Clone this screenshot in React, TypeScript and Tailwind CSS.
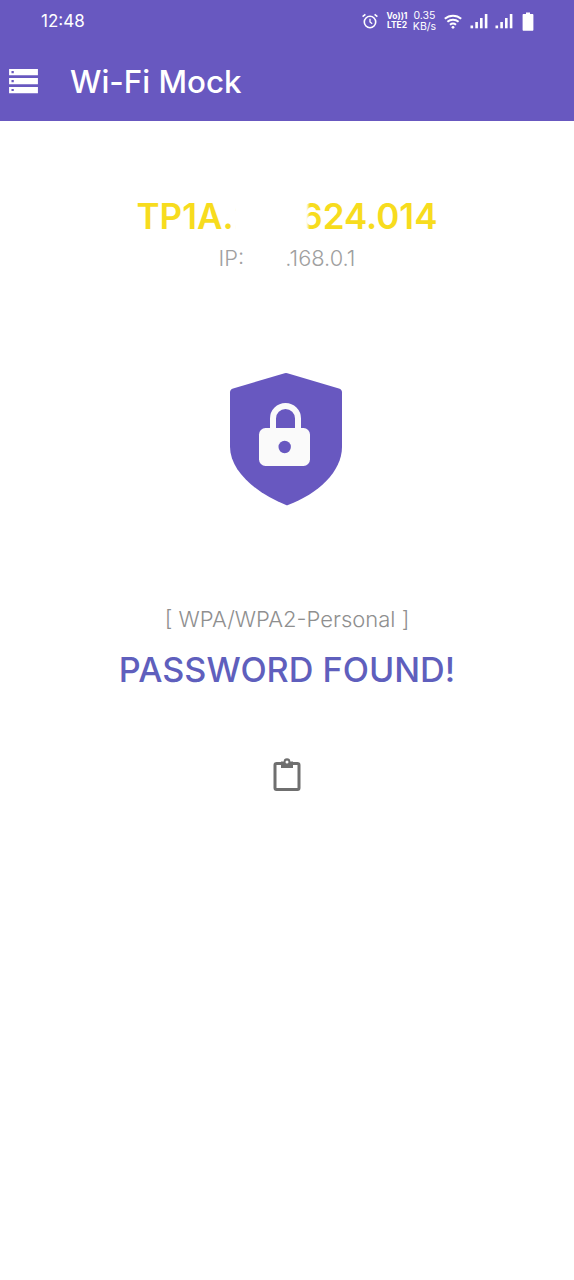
const inter = { fontFamily: "Inter, 'Noto Sans', sans-serif" }

function SignalIcon({ className }: { className: string }) {
  return (
    <svg width="18" height="16" viewBox="0 0 18 16" fill="currentColor" className={className}>
      <rect x="0.5" y="12.5" width="2.6" height="2.8" />
      <rect x="5.3" y="9" width="2.6" height="6.3" />
      <rect x="10" y="5" width="2.6" height="10.3" />
      <rect x="14.8" y="1" width="2.6" height="14.3" />
    </svg>
  )
}

function StatusIcons() {
  return (
    <div className="flex items-center text-white">
      {/* alarm */}
      <svg width="18" height="18" viewBox="0 0 18 18" fill="none" stroke="currentColor" strokeWidth="1.6" className="mr-[8px]">
        <circle cx="9" cy="10" r="5.7" />
        <path d="M9 6.800V10l2.200 1.800" strokeWidth="1.300" />
        <path d="M1.600 4.600 4.400 2.300M16.400 4.600l-2.800-2.300" />
      </svg>
      <div className="mr-[5px] flex w-[20px] flex-col items-center text-[8.500px] font-bold leading-[9px]">
        <span>Vo))1</span>
        <span>LTE2</span>
      </div>
      <div className="mr-[7px] flex w-[25px] flex-col items-center text-[10.500px] leading-[11px]">
        <span>0.35</span>
        <span>KB/s</span>
      </div>
      {/* wifi */}
      <svg width="18" height="15" viewBox="0 0 18 15" fill="none" stroke="currentColor" strokeWidth="2" className="mr-[8px]">
        <path d="M0.800 4.800C5.500 0.600 12.500 0.600 17.200 4.800" />
        <path d="M3.400 7.800C6.600 5.100 11.400 5.100 14.600 7.800" />
        <path d="M6 10.700C7.800 9.300 10.200 9.300 12 10.700" />
        <circle cx="9" cy="13.300" r="1.400" fill="currentColor" stroke="none" />
      </svg>
      <SignalIcon className="mr-[7px]" />
      <SignalIcon className="mr-[9px]" />
      {/* battery */}
      <svg width="12" height="19" viewBox="0 0 12 19" fill="currentColor">
        <path d="M4 0.500h4v1.600h2.400c.6 0 1 .4 1 1v14.600c0 .6-.4 1-1 1H1.600c-.6 0-1-.4-1-1V3.100c0-.6.4-1 1-1H4z" />
      </svg>
    </div>
  )
}

function MenuIcon() {
  return (
    <svg width="29" height="25" viewBox="0 0 30 26" className="shrink-0">
      <path fill="#fff" fillRule="evenodd" d="M0 0h30v6.600H0zM2.500 2.200v2.200h2.400V2.200zM0 9.300h30v6.600H0zM2.500 11.500v2.200h2.400v-2.200zM0 18.600h30v6.600H0zM2.500 20.800V23h2.400v-2.200z" />
    </svg>
  )
}

function ShieldLock() {
  return (
    <svg width="114" height="134" viewBox="0 0 114 134">
      <path
        fill="#6858c0"
        d="M55.600 1.200a5 5 0 0 1 2.800 0l51.500 15.200c2 .6 3.100 2 3.100 4v54.400c0 25-24 47-54 58.300a3 3 0 0 1-2 0C29 122 1 99.800 1 74.800V20.400c0-2 1.100-3.400 3.100-4z"
      />
      <path
        fill="none"
        stroke="#fafafa"
        strokeWidth="6"
        d="M44 58V46.500a12.500 12.500 0 0 1 25 0V58"
      />
      <rect x="30" y="56" width="51" height="38" rx="6.500" fill="#fafafa" />
      <circle cx="55.700" cy="75" r="6.200" fill="#6858c0" />
    </svg>
  )
}

function ClipboardIcon() {
  return (
    <svg width="28" height="33" viewBox="0 0 28 33" fill="none">
      <path
        stroke="#6f6f6f"
        strokeWidth="3"
        strokeLinejoin="round"
        d="M8 5.500H3.500a1.500 1.500 0 0 0-1.500 1.500v23a1.500 1.500 0 0 0 1.500 1.500h21a1.500 1.500 0 0 0 1.500-1.500V7a1.500 1.500 0 0 0-1.500-1.500H20"
      />
      <path
        fill="#6f6f6f"
        fillRule="evenodd"
        d="M10.700 3.600a3.300 3.300 0 0 1 6.600 0H20v6.400H8V3.600zM14 2.500a1.500 1.500 0 1 0 0 3 1.500 1.500 0 0 0 0-3z"
      />
    </svg>
  )
}

export default function App() {
  return (
    <div className="flex min-h-[1280px] w-[574px] flex-col bg-white" style={inter}>
      {/* Header */}
      <header className="h-[121px] bg-[#6858c0] text-white">
        <div className="flex h-[42px] items-center justify-between pl-[41px] pr-[40px]">
          <span className="text-[17px] leading-none">12:48</span>
          <StatusIcons />
        </div>
        <div className="flex h-[79px] items-center pl-[9px]">
          <MenuIcon />
          <h1 className="ml-[32px] pt-[2px] text-[31.300px] font-medium leading-none">Wi-Fi Mock</h1>
        </div>
      </header>

      <main className="flex flex-col items-center">
        {/* Device */}
        <div className="relative mt-[75px] flex flex-col items-center">
          <h2 className="text-[35px] font-semibold leading-[40px] text-[#f7dc1e]">TP1A.220624.014</h2>
          <p className="mt-[10px] text-[21.800px] font-light leading-[24px] text-[#a0a0a0]">IP: 192.168.0.1</p>
          <div className="absolute left-[97px] top-0 h-[42px] w-[74px] bg-white blur-[1px]" />
          <div className="absolute left-[108px] top-[44px] h-[32px] w-[41px] bg-white blur-[1px]" />
        </div>

        <div className="ml-[-2px] mt-[102px]">
          <ShieldLock />
        </div>

        <p className="mt-[100px] text-[22px] font-light leading-[26px] text-[#8f8f8f]">[ WPA/WPA2-Personal ]</p>
        <p className="mt-[19px] text-[34.200px] font-medium leading-[38px] text-[#5f5fbd]">PASSWORD FOUND!</p>

        <div className="mt-[69px]">
          <ClipboardIcon />
        </div>
      </main>
    </div>
  )
}
